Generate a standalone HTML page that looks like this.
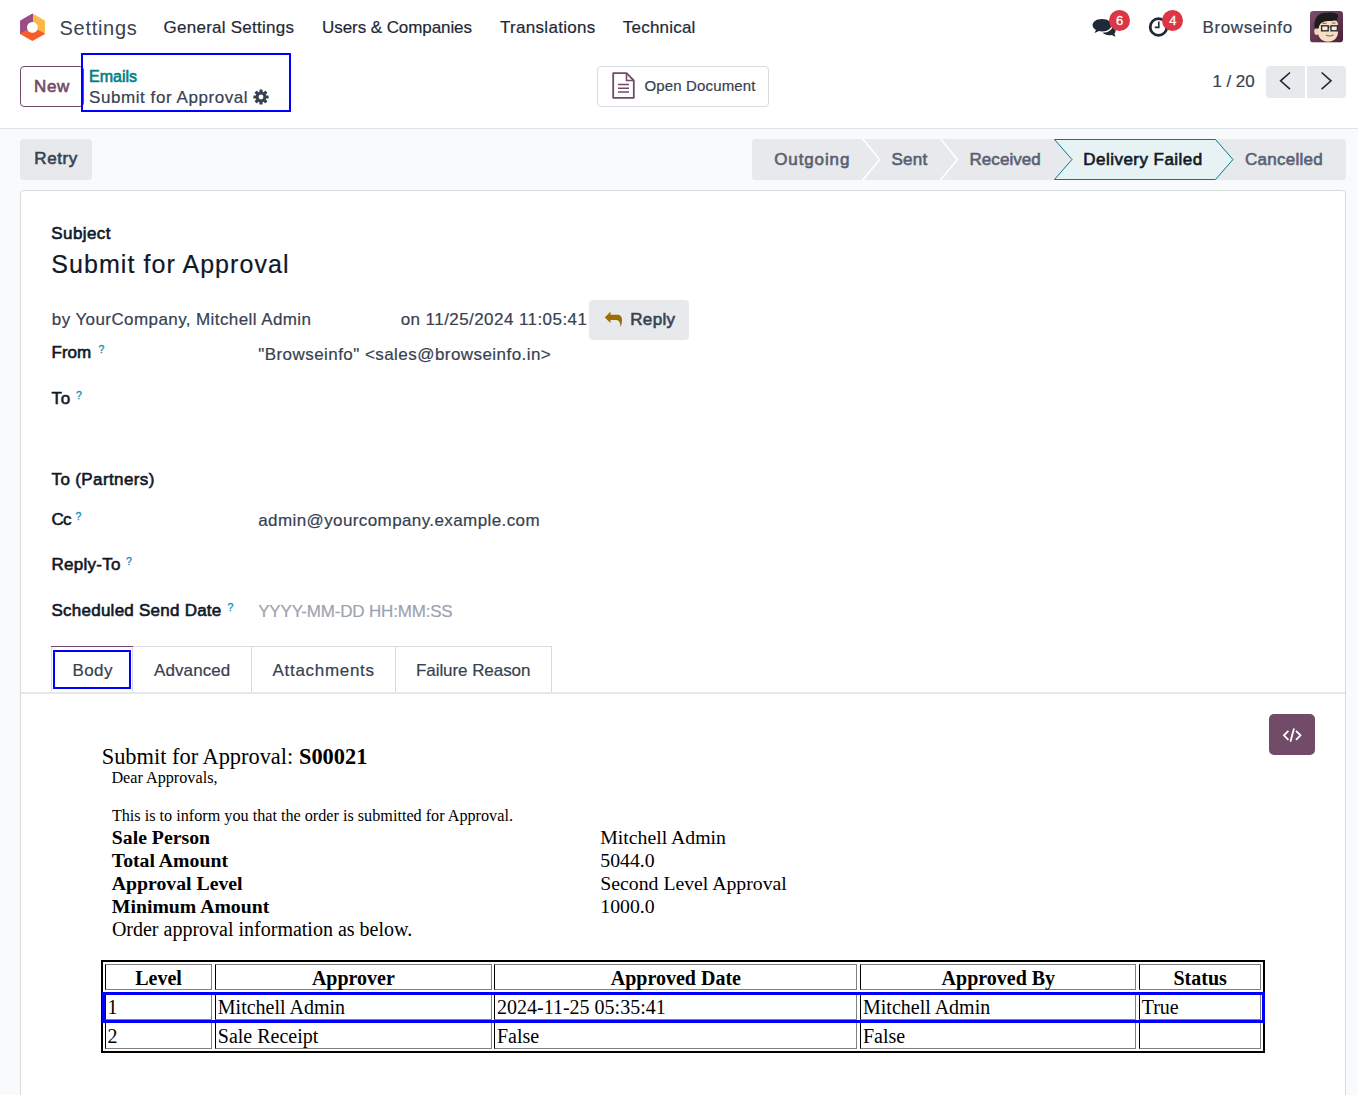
<!DOCTYPE html>
<html><head><meta charset="utf-8"><title>Settings</title>
<style>
html,body{margin:0;padding:0;}
body{width:1358px;height:1095px;overflow:hidden;position:relative;background:#f9fafb;font-family:"Liberation Sans",sans-serif;}
.b{position:absolute;}
.t{position:absolute;white-space:pre;}
.badge{width:21px;height:21px;border-radius:50%;background:#dc3545;color:#fff;font-size:13px;-webkit-text-stroke:0.3px #fff;line-height:21px;text-align:center;}
</style></head><body>
<div class="b" style="left:0px;top:0px;width:1358px;height:128px;background:#fff;"></div>
<div class="b" style="left:0px;top:128px;width:1358px;height:1px;background:#dee2e6;"></div>
<svg class="b" style="left:18px;top:12px" width="30" height="31" viewBox="18 12 30 31">
<path d="M32.4 14 L44.4 20.8 L44.4 33.8 L32.4 27.4 Z" fill="#fbb945" stroke="#fbb945" stroke-width="1" stroke-linejoin="round"/>
<path d="M32.4 14 L20.6 20.8 L20.6 33.8 L32.4 27.4 Z" fill="#9a4d86" stroke="#9a4d86" stroke-width="1" stroke-linejoin="round"/>
<path d="M20.6 33.8 L32.4 40.5 L44.4 33.8 L32.4 27.4 Z" fill="#f75d25" stroke="#f75d25" stroke-width="1" stroke-linejoin="round"/>
<circle cx="32.4" cy="27.4" r="5.4" fill="#fff"/>
</svg>
<div class="t" style="left:59.60px;top:16.27px;font-size:20px;line-height:24px;color:#3b4452;letter-spacing:0.691px;-webkit-text-stroke:0.05px #3b4452;">Settings</div>
<div class="t" style="left:163.60px;top:18.21px;font-size:17px;line-height:20px;color:#1f2937;-webkit-text-stroke:0.2px #1f2937;letter-spacing:0.244px;">General Settings</div>
<div class="t" style="left:322.10px;top:18.21px;font-size:17px;line-height:20px;color:#1f2937;-webkit-text-stroke:0.2px #1f2937;letter-spacing:-0.079px;">Users &amp; Companies</div>
<div class="t" style="left:500.00px;top:18.11px;font-size:17px;line-height:20px;color:#1f2937;-webkit-text-stroke:0.2px #1f2937;letter-spacing:0.303px;">Translations</div>
<div class="t" style="left:622.80px;top:18.11px;font-size:17px;line-height:20px;color:#1f2937;-webkit-text-stroke:0.2px #1f2937;letter-spacing:0.216px;">Technical</div>
<div class="t" style="left:1202.50px;top:17.61px;font-size:17px;line-height:20px;color:#374151;-webkit-text-stroke:0.2px #374151;letter-spacing:0.611px;">Browseinfo</div>
<svg class="b" style="left:1090px;top:16px" width="28" height="24" viewBox="0 0 28 24">
<path d="M12 3 C6 3 2.6 6 2.6 9.2 C2.6 11.2 4 12.9 6 14 L4.5 17 L9 15 C10 15.3 11 15.4 12 15.4 C18 15.4 21.4 12.4 21.4 9.2 C21.4 6 18 3 12 3 Z" fill="#1f2937"/>
<path d="M22.6 9.5 C22.8 13.6 18.6 16.6 12.6 16.8 C14 18.3 16.5 19.2 19.5 19.2 C20.3 19.2 21 19.1 21.6 19 L25.6 20.8 L24.3 17.6 C25.3 16.6 25.6 15.6 25.6 14.4 C25.6 12.6 24.4 10.8 22.6 9.5 Z" fill="#1f2937"/>
</svg>
<div class="b badge" style="left:1109px;top:9.6px;">6</div>
<svg class="b" style="left:1147px;top:15px" width="24" height="24" viewBox="0 0 24 24">
<circle cx="11.5" cy="12" r="8.3" fill="none" stroke="#1f2937" stroke-width="2.8"/>
<path d="M11.8 6.5 V12.4 H7.8" fill="none" stroke="#1f2937" stroke-width="1.6"/>
</svg>
<div class="b badge" style="left:1162.3px;top:9.6px;">4</div>
<svg class="b" style="left:1310px;top:11px" width="33" height="32" viewBox="0 0 33 32">
<defs><linearGradient id="ag" x1="0" y1="0" x2="1" y2="1"><stop offset="0" stop-color="#7a4f72"/><stop offset="1" stop-color="#4a2035"/></linearGradient>
<clipPath id="ac"><rect x="0" y="0" width="33" height="31.6" rx="3.3"/></clipPath></defs>
<g clip-path="url(#ac)">
<rect x="0" y="0" width="33" height="31.6" fill="url(#ag)"/>
<ellipse cx="6.6" cy="20.5" rx="2.3" ry="3.4" fill="#f6d2b4"/>
<path d="M8 12 C8 8 12 8.5 18 8.5 C24 8.5 28 9 28 14 L28 21 C28 27 23.5 30.8 18 30.8 C12.5 30.8 8 27 8 21 Z" fill="#f9dec6"/>
<path d="M4.6 17.5 C3.6 10 6 3.5 13 2 C19 0.8 25.5 1.5 27.5 3 C28.5 4.5 28 7.5 26.5 9 C24 10 20 10 16 10.3 C12 10.8 9.5 12.5 8.6 17.5 Z" fill="#1c1c1c"/>
<path d="M12.5 12.3 H16.5 M22 12 H25.5" stroke="#6b4a3a" stroke-width="0.9"/>
<rect x="11.6" y="14.8" width="6.6" height="5" fill="#fff" fill-opacity="0.35" stroke="#2e2e2e" stroke-width="1.4"/>
<rect x="21" y="14.8" width="6.4" height="5" fill="#fff" fill-opacity="0.35" stroke="#2e2e2e" stroke-width="1.4"/>
<path d="M18.2 16 H21" stroke="#2e2e2e" stroke-width="1.1"/>
<path d="M16 24 Q20 26.3 23.8 23.6" fill="none" stroke="#6b6b6b" stroke-width="1.1"/>
</g></svg>
<div class="b" style="left:20px;top:66px;width:64px;height:41px;background:#fff;border:1px solid #714b67;border-radius:4px;box-sizing:border-box;"></div>
<div class="t" style="left:34.10px;top:77.11px;font-size:17px;line-height:20px;color:#714b67;-webkit-text-stroke:0.6px #714b67;letter-spacing:0.624px;">New</div>
<div class="t" style="left:89.00px;top:66.96px;font-size:16px;line-height:19px;color:#017e84;-webkit-text-stroke:0.6px #017e84;">Emails</div>
<div class="t" style="left:89.00px;top:87.81px;font-size:17px;line-height:20px;color:#374151;-webkit-text-stroke:0.2px #374151;letter-spacing:0.569px;">Submit for Approval</div>
<svg class="b" style="left:253px;top:89px" width="16" height="16" viewBox="0 0 16 16">
<g fill="#374151" transform="translate(8 8)">
<circle r="5.3"/>
<rect x="-1.6" y="-7.6" width="3.2" height="15.2" rx="0.6"/>
<rect x="-1.6" y="-7.6" width="3.2" height="15.2" rx="0.6" transform="rotate(45)"/>
<rect x="-1.6" y="-7.6" width="3.2" height="15.2" rx="0.6" transform="rotate(90)"/>
<rect x="-1.6" y="-7.6" width="3.2" height="15.2" rx="0.6" transform="rotate(135)"/>
<circle r="2.4" fill="#fff"/>
</g></svg>
<div class="b" style="left:81px;top:53px;width:210px;height:59px;border:2px solid #0000ff;box-sizing:border-box;"></div>
<div class="b" style="left:597px;top:66px;width:172px;height:41px;border:1px solid #d8dadd;border-radius:4px;box-sizing:border-box;background:#fff;"></div>
<svg class="b" style="left:612px;top:72px" width="24" height="28" viewBox="0 0 24 28">
<path d="M1.2 1.2 H14.5 L21.8 8.5 V25.8 H1.2 Z" fill="none" stroke="#714b67" stroke-width="1.8" stroke-linejoin="round"/>
<path d="M14.5 1.2 V8.5 H21.8" fill="none" stroke="#714b67" stroke-width="1.6"/>
<path d="M6 12.5 H17 M6 16.3 H17 M6 20 H17" stroke="#714b67" stroke-width="1.4"/>
</svg>
<div class="t" style="left:644.40px;top:77.30px;font-size:15px;line-height:18px;color:#374151;-webkit-text-stroke:0.2px #374151;letter-spacing:0.156px;">Open Document</div>
<div class="t" style="left:1212.60px;top:72.01px;font-size:17px;line-height:20px;color:#374151;-webkit-text-stroke:0.2px #374151;letter-spacing:-0.087px;">1 / 20</div>
<div class="b" style="left:1266px;top:66px;width:39px;height:32px;background:#e7e9ed;border-radius:4px 0 0 4px;"></div>
<div class="b" style="left:1307px;top:66px;width:39px;height:32px;background:#e7e9ed;border-radius:0 4px 4px 0;"></div>
<svg class="b" style="left:1266px;top:66px" width="80" height="32" viewBox="0 0 80 32">
<path d="M24 6.5 L14.6 14.8 L24 23.2" fill="none" stroke="#1f2937" stroke-width="1.6"/>
<path d="M55.6 6.5 L65 14.8 L55.6 23.2" fill="none" stroke="#1f2937" stroke-width="1.6"/>
</svg>
<div class="b" style="left:0px;top:129px;width:1358px;height:966px;background:#f9fafb;"></div>
<div class="b" style="left:20px;top:139px;width:72px;height:41px;background:#e7e9ed;border-radius:4px;"></div>
<div class="t" style="left:34.30px;top:149.41px;font-size:17px;line-height:20px;color:#374151;-webkit-text-stroke:0.6px #374151;letter-spacing:0.572px;">Retry</div>
<svg class="b" style="left:752px;top:139px" width="594" height="41" viewBox="752 139 594 41">
<path d="M755.5 139 H1342.5 Q1346 139 1346 142.5 V176.5 Q1346 180 1342.5 180 H755.5 Q752 180 752 176.5 V142.5 Q752 139 755.5 139 Z" fill="#e7e9ed"/>
<path d="M862 138 L879.5 159.5 L862 181" fill="none" stroke="#fff" stroke-width="1.6"/>
<path d="M939.8 138 L957.3 159.5 L939.8 181" fill="none" stroke="#fff" stroke-width="1.6"/>
<path d="M1054.5 139.5 H1215.5 L1233 159.5 L1215.5 179.5 H1054.5 L1072 159.5 Z" fill="#e6f2f3" stroke="#017e84" stroke-width="1"/>
</svg>
<div class="t" style="left:774.20px;top:150.01px;font-size:17px;line-height:20px;color:#596170;-webkit-text-stroke:0.6px #596170;letter-spacing:0.885px;">Outgoing</div>
<div class="t" style="left:891.40px;top:150.01px;font-size:17px;line-height:20px;color:#596170;-webkit-text-stroke:0.6px #596170;letter-spacing:0.310px;">Sent</div>
<div class="t" style="left:969.50px;top:150.01px;font-size:17px;line-height:20px;color:#596170;-webkit-text-stroke:0.6px #596170;letter-spacing:0.061px;">Received</div>
<div class="t" style="left:1083.30px;top:150.01px;font-size:17px;line-height:20px;color:#111827;-webkit-text-stroke:0.6px #111827;letter-spacing:0.463px;">Delivery Failed</div>
<div class="t" style="left:1244.90px;top:150.01px;font-size:17px;line-height:20px;color:#596170;-webkit-text-stroke:0.6px #596170;letter-spacing:0.288px;">Cancelled</div>
<div class="b" style="left:20px;top:190px;width:1326px;height:1010px;background:#fff;border:1px solid #d8dadd;border-radius:4px;box-sizing:border-box;"></div>
<div class="t" style="left:51.30px;top:224.31px;font-size:17px;line-height:20px;color:#111827;-webkit-text-stroke:0.6px #111827;letter-spacing:0.417px;">Subject</div>
<div class="t" style="left:51.30px;top:249.14px;font-size:25px;line-height:30px;color:#111827;-webkit-text-stroke:0.2px #111827;letter-spacing:1.057px;">Submit for Approval</div>
<div class="t" style="left:51.80px;top:309.81px;font-size:17px;line-height:20px;color:#374151;-webkit-text-stroke:0.2px #374151;letter-spacing:0.412px;">by YourCompany, Mitchell Admin</div>
<div class="t" style="left:400.70px;top:309.51px;font-size:17px;line-height:20px;color:#374151;-webkit-text-stroke:0.2px #374151;letter-spacing:0.434px;">on 11/25/2024 11:05:41</div>
<div class="b" style="left:589px;top:300px;width:100px;height:40px;background:#e7e9ed;border-radius:4px;"></div>
<svg class="b" style="left:604px;top:310px" width="20" height="18" viewBox="0 0 20 18">
<path d="M0.8 7.4 L6.5 1.5 V4.8 H13.5 C16.8 4.8 18.2 7.5 18 10.5 C17.9 13 17.3 15.5 16.5 17 C16.4 14 15.6 10.1 12.5 10.1 H6.5 V13.1 Z" fill="#9b6d05"/>
</svg>
<div class="t" style="left:630.20px;top:309.91px;font-size:17px;line-height:20px;color:#374151;-webkit-text-stroke:0.6px #374151;letter-spacing:0.358px;">Reply</div>
<div class="t" style="left:51.50px;top:343.41px;font-size:17px;line-height:20px;color:#111827;-webkit-text-stroke:0.6px #111827;letter-spacing:0.013px;">From</div>
<div class="t" style="left:98.40px;top:342.76px;font-size:10.5px;line-height:13px;color:#1392b8;-webkit-text-stroke:0.35px #1392b8;">?</div>
<div class="t" style="left:258.20px;top:344.81px;font-size:17px;line-height:20px;color:#374151;-webkit-text-stroke:0.2px #374151;letter-spacing:0.447px;">&quot;Browseinfo&quot; &lt;sales@browseinfo.in&gt;</div>
<div class="t" style="left:51.50px;top:389.41px;font-size:17px;line-height:20px;color:#111827;-webkit-text-stroke:0.6px #111827;letter-spacing:0.848px;">To</div>
<div class="t" style="left:75.90px;top:388.76px;font-size:10.5px;line-height:13px;color:#1392b8;-webkit-text-stroke:0.35px #1392b8;">?</div>
<div class="t" style="left:51.50px;top:469.81px;font-size:17px;line-height:20px;color:#111827;-webkit-text-stroke:0.6px #111827;letter-spacing:0.380px;">To (Partners)</div>
<div class="t" style="left:51.50px;top:510.21px;font-size:17px;line-height:20px;color:#111827;-webkit-text-stroke:0.6px #111827;letter-spacing:-0.874px;">Cc</div>
<div class="t" style="left:75.60px;top:509.56px;font-size:10.5px;line-height:13px;color:#1392b8;-webkit-text-stroke:0.35px #1392b8;">?</div>
<div class="t" style="left:258.20px;top:510.61px;font-size:17px;line-height:20px;color:#374151;-webkit-text-stroke:0.2px #374151;letter-spacing:0.401px;">admin@yourcompany.example.com</div>
<div class="t" style="left:51.50px;top:555.41px;font-size:17px;line-height:20px;color:#111827;-webkit-text-stroke:0.6px #111827;letter-spacing:0.260px;">Reply-To</div>
<div class="t" style="left:126.10px;top:554.76px;font-size:10.5px;line-height:13px;color:#1392b8;-webkit-text-stroke:0.35px #1392b8;">?</div>
<div class="t" style="left:51.50px;top:601.41px;font-size:17px;line-height:20px;color:#111827;-webkit-text-stroke:0.6px #111827;letter-spacing:0.244px;">Scheduled Send Date</div>
<div class="t" style="left:227.60px;top:600.76px;font-size:10.5px;line-height:13px;color:#1392b8;-webkit-text-stroke:0.35px #1392b8;">?</div>
<div class="t" style="left:258.20px;top:601.61px;font-size:17px;line-height:20px;color:#9ca3af;-webkit-text-stroke:0.2px #9ca3af;letter-spacing:-0.178px;">YYYY-MM-DD HH:MM:SS</div>
<div class="b" style="left:21px;top:692px;width:1324px;height:2px;background:#e5e7eb;"></div>
<div class="b" style="left:51px;top:646px;width:501px;height:46px;border:1px solid #d8dadd;border-bottom:none;box-sizing:border-box;background:#fff;"></div>
<div class="b" style="left:132px;top:646px;width:1px;height:46px;background:#d8dadd;"></div>
<div class="b" style="left:251px;top:646px;width:1px;height:46px;background:#d8dadd;"></div>
<div class="b" style="left:395px;top:646px;width:1px;height:46px;background:#d8dadd;"></div>
<div class="b" style="left:51px;top:646px;width:82px;height:1px;background:#714b67;"></div>
<div class="b" style="left:53px;top:650px;width:78px;height:39px;border:2px solid #0000ff;box-sizing:border-box;"></div>
<div class="t" style="left:72.60px;top:660.61px;font-size:17px;line-height:20px;color:#374151;-webkit-text-stroke:0.2px #374151;letter-spacing:0.352px;">Body</div>
<div class="t" style="left:154.00px;top:660.61px;font-size:17px;line-height:20px;color:#374151;-webkit-text-stroke:0.2px #374151;letter-spacing:0.098px;">Advanced</div>
<div class="t" style="left:272.50px;top:660.61px;font-size:17px;line-height:20px;color:#374151;-webkit-text-stroke:0.2px #374151;letter-spacing:0.701px;">Attachments</div>
<div class="t" style="left:416.00px;top:660.61px;font-size:17px;line-height:20px;color:#374151;-webkit-text-stroke:0.2px #374151;letter-spacing:-0.067px;">Failure Reason</div>
<div class="b" style="left:1269px;top:713.5px;width:46px;height:41.0px;background:#714b67;border-radius:5px;"></div>
<svg class="b" style="left:1269px;top:713.5px" width="46" height="41" viewBox="0 0 46 41">
<path d="M19.4 16.8 L14.9 21.3 L19.4 25.8 M27 16.8 L31.5 21.3 L27 25.8 M25 14.6 L21.4 27.8" fill="none" stroke="#fff" stroke-width="1.8"/>
</svg>
<div class="t" style="left:101.70px;top:743.04px;font-size:22.4px;line-height:27px;color:#000;font-family:'Liberation Serif',serif;">Submit for Approval: </div>
<div class="t" style="left:298.94px;top:743.04px;font-size:22.4px;line-height:27px;color:#000;font-weight:bold;font-family:'Liberation Serif',serif;">S00021</div>
<div class="t" style="left:111.40px;top:769.43px;font-size:16.2px;line-height:19px;color:#000;font-family:'Liberation Serif',serif;">Dear Approvals,</div>
<div class="t" style="left:111.90px;top:807.23px;font-size:16.2px;line-height:19px;color:#000;font-family:'Liberation Serif',serif;">This is to inform you that the order is submitted for Approval.</div>
<div class="t" style="left:111.80px;top:825.23px;font-size:19.75px;line-height:24px;color:#000;font-weight:bold;font-family:'Liberation Serif',serif;">Sale Person</div>
<div class="t" style="left:600.30px;top:825.23px;font-size:19.75px;line-height:24px;color:#000;font-family:'Liberation Serif',serif;">Mitchell Admin</div>
<div class="t" style="left:111.80px;top:848.33px;font-size:19.75px;line-height:24px;color:#000;font-weight:bold;font-family:'Liberation Serif',serif;">Total Amount</div>
<div class="t" style="left:600.30px;top:848.33px;font-size:19.75px;line-height:24px;color:#000;font-family:'Liberation Serif',serif;">5044.0</div>
<div class="t" style="left:111.80px;top:871.23px;font-size:19.75px;line-height:24px;color:#000;font-weight:bold;font-family:'Liberation Serif',serif;">Approval Level</div>
<div class="t" style="left:600.30px;top:871.23px;font-size:19.75px;line-height:24px;color:#000;font-family:'Liberation Serif',serif;">Second Level Approval</div>
<div class="t" style="left:111.80px;top:894.23px;font-size:19.75px;line-height:24px;color:#000;font-weight:bold;font-family:'Liberation Serif',serif;">Minimum Amount</div>
<div class="t" style="left:600.30px;top:894.23px;font-size:19.75px;line-height:24px;color:#000;font-family:'Liberation Serif',serif;">1000.0</div>
<div class="t" style="left:111.90px;top:916.85px;font-size:20px;line-height:24px;color:#000;font-family:'Liberation Serif',serif;">Order approval information as below.</div>
<div class="b" style="left:101px;top:960px;width:1164px;height:93px;border:2px solid #000;box-sizing:border-box;"></div>
<div class="b" style="left:105px;top:964px;width:107px;height:26px;border:1px solid #808080;border-left-color:#000;box-sizing:border-box;"></div>
<div class="b" style="left:105px;top:993px;width:107px;height:27px;border:1px solid #808080;border-left-color:#000;box-sizing:border-box;"></div>
<div class="b" style="left:105px;top:1022px;width:107px;height:27px;border:1px solid #808080;border-left-color:#000;box-sizing:border-box;"></div>
<div class="b" style="left:215px;top:964px;width:277px;height:26px;border:1px solid #808080;border-left-color:#000;box-sizing:border-box;"></div>
<div class="b" style="left:215px;top:993px;width:277px;height:27px;border:1px solid #808080;border-left-color:#000;box-sizing:border-box;"></div>
<div class="b" style="left:215px;top:1022px;width:277px;height:27px;border:1px solid #808080;border-left-color:#000;box-sizing:border-box;"></div>
<div class="b" style="left:494px;top:964px;width:363px;height:26px;border:1px solid #808080;border-left-color:#000;box-sizing:border-box;"></div>
<div class="b" style="left:494px;top:993px;width:363px;height:27px;border:1px solid #808080;border-left-color:#000;box-sizing:border-box;"></div>
<div class="b" style="left:494px;top:1022px;width:363px;height:27px;border:1px solid #808080;border-left-color:#000;box-sizing:border-box;"></div>
<div class="b" style="left:860px;top:964px;width:276px;height:26px;border:1px solid #808080;border-left-color:#000;box-sizing:border-box;"></div>
<div class="b" style="left:860px;top:993px;width:276px;height:27px;border:1px solid #808080;border-left-color:#000;box-sizing:border-box;"></div>
<div class="b" style="left:860px;top:1022px;width:276px;height:27px;border:1px solid #808080;border-left-color:#000;box-sizing:border-box;"></div>
<div class="b" style="left:1139px;top:964px;width:122px;height:26px;border:1px solid #808080;border-left-color:#000;box-sizing:border-box;"></div>
<div class="b" style="left:1139px;top:993px;width:122px;height:27px;border:1px solid #808080;border-left-color:#000;box-sizing:border-box;"></div>
<div class="b" style="left:1139px;top:1022px;width:122px;height:27px;border:1px solid #808080;border-left-color:#000;box-sizing:border-box;"></div>
<div class="t" style="left:135.27px;top:965.75px;font-size:20px;line-height:24px;color:#000;font-weight:bold;font-family:'Liberation Serif',serif;">Level</div>
<div class="t" style="left:311.92px;top:965.75px;font-size:20px;line-height:24px;color:#000;font-weight:bold;font-family:'Liberation Serif',serif;">Approver</div>
<div class="t" style="left:610.76px;top:965.75px;font-size:20px;line-height:24px;color:#000;font-weight:bold;font-family:'Liberation Serif',serif;">Approved Date</div>
<div class="t" style="left:941.58px;top:965.75px;font-size:20px;line-height:24px;color:#000;font-weight:bold;font-family:'Liberation Serif',serif;">Approved By</div>
<div class="t" style="left:1173.47px;top:965.75px;font-size:20px;line-height:24px;color:#000;font-weight:bold;font-family:'Liberation Serif',serif;">Status</div>
<div class="t" style="left:107.40px;top:995.05px;font-size:20px;line-height:24px;color:#000;font-family:'Liberation Serif',serif;">1</div>
<div class="t" style="left:107.40px;top:1023.85px;font-size:20px;line-height:24px;color:#000;font-family:'Liberation Serif',serif;">2</div>
<div class="t" style="left:217.80px;top:995.05px;font-size:20px;line-height:24px;color:#000;font-family:'Liberation Serif',serif;">Mitchell Admin</div>
<div class="t" style="left:217.80px;top:1023.85px;font-size:20px;line-height:24px;color:#000;font-family:'Liberation Serif',serif;">Sale Receipt</div>
<div class="t" style="left:497.00px;top:995.05px;font-size:20px;line-height:24px;color:#000;font-family:'Liberation Serif',serif;">2024-11-25 05:35:41</div>
<div class="t" style="left:497.00px;top:1023.85px;font-size:20px;line-height:24px;color:#000;font-family:'Liberation Serif',serif;">False</div>
<div class="t" style="left:863.00px;top:995.05px;font-size:20px;line-height:24px;color:#000;font-family:'Liberation Serif',serif;">Mitchell Admin</div>
<div class="t" style="left:863.00px;top:1023.85px;font-size:20px;line-height:24px;color:#000;font-family:'Liberation Serif',serif;">False</div>
<div class="t" style="left:1141.70px;top:995.05px;font-size:20px;line-height:24px;color:#000;font-family:'Liberation Serif',serif;">True</div>
<div class="b" style="left:102px;top:991.5px;width:1163px;height:31.5px;border:3px solid #0000ff;box-sizing:border-box;"></div>
</body></html>
